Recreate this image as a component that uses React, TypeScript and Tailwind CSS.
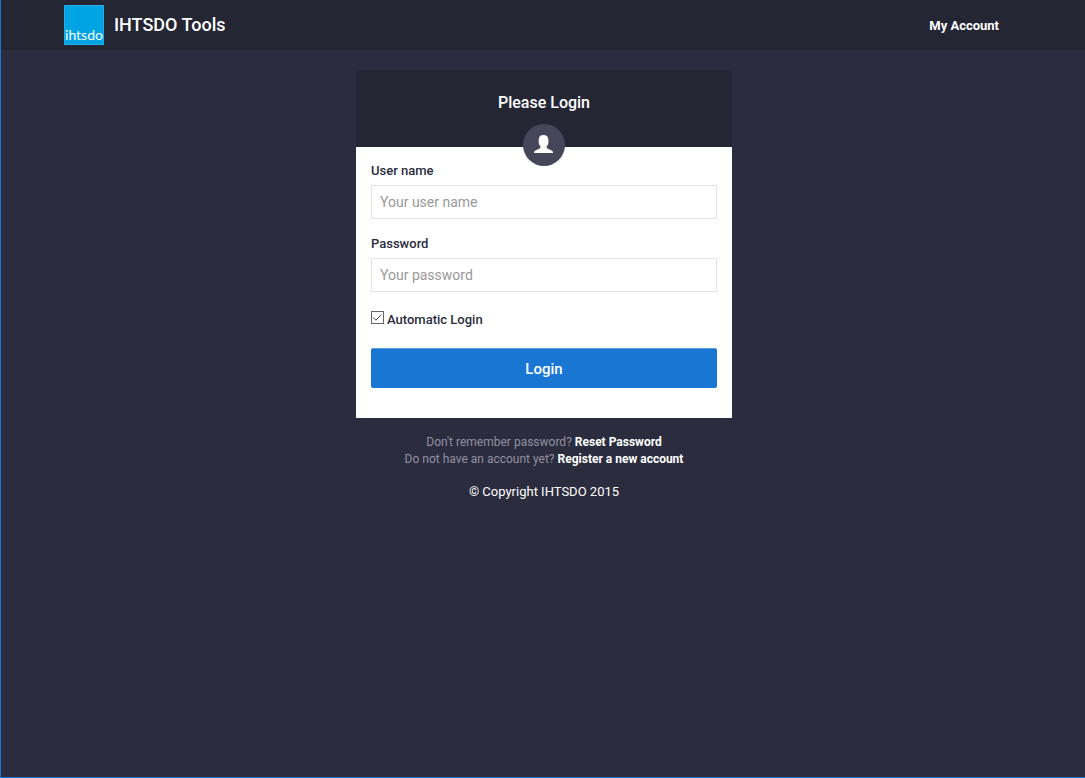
import React, { useState } from "react"

const labelStyle = "block text-[13px] leading-5 font-medium text-[#2b2c3d]"

const inputStyle =
  "block h-[34px] w-full border border-[#e3e3e3] bg-white px-2 text-sm text-[#2b2c3d] outline-none placeholder:text-[#999999] focus:border-[#1976d2]"

export default function App() {
  return (
    <div className="flex min-h-screen flex-col border-b border-l border-[#1976d2] bg-[#2b2c3d] font-['Roboto',sans-serif] text-white">
      <Header />
      <main className="flex flex-col items-center pt-5 pl-0.5">
        <LoginCard />
        <Footer />
      </main>
    </div>
  )
}

function Header() {
  return (
    <header className="flex h-[50px] items-center justify-between bg-[#242634] pr-[86px] pl-[63px]">
      <a href="#" className="flex items-center gap-[10px]">
        <Logo />
        <span className="text-lg font-medium">IHTSDO Tools</span>
      </a>
      <a href="#account" className="pt-0.5 text-[13px] leading-5 font-bold">
        My Account
      </a>
    </header>
  )
}

function Logo() {
  return (
    <span className="flex size-10 items-end justify-center border border-[#1fb0ea] bg-[#00a3e4] font-['Lato',sans-serif] text-sm leading-[18px]">
      ihtsdo
    </span>
  )
}

function LoginCard() {
  const [automatic, setAutomatic] = useState(true)

  return (
    <section className="w-full max-w-[376px]">
      <div className="relative h-[77px] bg-[#242634] pt-[22px] text-center">
        <h1 className="text-base leading-[22px] font-medium">Please Login</h1>
        <div className="absolute -bottom-[19px] left-1/2 flex size-[42px] -translate-x-1/2 justify-center rounded-full bg-[#464659] pt-[11px]">
          <UserIcon />
        </div>
      </div>
      <form
        className="bg-white px-[15px] pt-[14px] pb-[30px]"
        onSubmit={(e) => e.preventDefault()}
      >
        <div className="mb-[15px]">
          <label htmlFor="username" className={`${labelStyle} mb-1`}>
            User name
          </label>
          <input
            id="username"
            type="text"
            placeholder="Your user name"
            className={inputStyle}
          />
        </div>
        <div className="mb-[15px]">
          <label htmlFor="password" className={`${labelStyle} mb-1`}>
            Password
          </label>
          <input
            id="password"
            type="password"
            placeholder="Your password"
            className={inputStyle}
          />
        </div>
        <div className="mb-[18px] flex items-start gap-[3px] pt-[3px]">
          <span className="grid pt-px">
            <input
              id="automatic"
              type="checkbox"
              checked={automatic}
              onChange={(e) => setAutomatic(e.target.checked)}
              className="col-start-1 row-start-1 size-[13px] appearance-none border border-[#666666] bg-white"
            />
            {automatic && (
              <svg
                viewBox="0 0 13 13"
                className="pointer-events-none col-start-1 row-start-1 size-[13px]"
                fill="none"
                stroke="#444444"
              >
                <path d="M2.2 6.5 4.8 9.2 10.3 3.7" />
              </svg>
            )}
          </span>
          <label htmlFor="automatic" className={labelStyle}>
            Automatic Login
          </label>
        </div>
        <button
          type="submit"
          className="block h-10 w-full cursor-pointer rounded-xs border-t border-[#5c9fe0] bg-[#1976d2] pt-px text-[15px] font-medium text-white"
        >
          Login
        </button>
      </form>
    </section>
  )
}

function UserIcon() {
  return (
    <svg viewBox="0 0 20 18" className="h-[18px] w-5" fill="#ffffff">
      <path d="M9.500 0C6.500 0 4.700 1.800 4.700 4.800V7c0 1.900.7 3.300 1.700 4.200v1.300c0 .4-.3.700-.7.900L1.500 15.500C.6 16 .1 16.600.1 17.400V18h18.900v-.6c0-.8-.5-1.400-1.400-1.900l-4.200-2.100c-.4-.2-.7-.5-.7-.9v-1.300c1-.9 1.700-2.300 1.700-4.200V4.800C14.400 1.800 12.500 0 9.500 0z" />
    </svg>
  )
}

function Footer() {
  return (
    <footer className="pt-4 text-center">
      <div className="text-xs leading-[17px] text-[#9191a3]">
        <p>
          Don't remember password?{" "}
          <a href="#reset" className="font-bold text-white">
            Reset Password
          </a>
        </p>
        <p>
          Do not have an account yet?{" "}
          <a href="#register" className="font-bold text-white">
            Register a new account
          </a>
        </p>
      </div>
      <p className="mt-[14px] text-[13px] leading-5">
        © Copyright IHTSDO 2015
      </p>
    </footer>
  )
}
